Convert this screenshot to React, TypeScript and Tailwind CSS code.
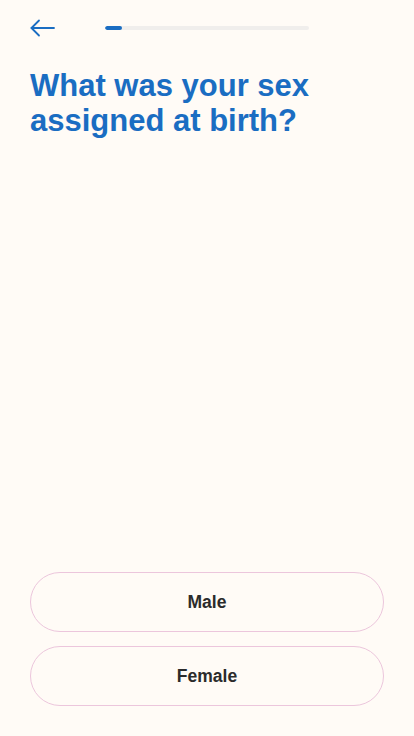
const options = ['Male', 'Female'];

export default function App() {
  return (
    <div
      className="min-h-[736px] w-full bg-[#fffbf6] flex flex-col px-[30px] pb-[30px]"
      style={{ fontFamily: '"Liberation Sans", Arial, sans-serif' }}
    >
      {/* Header */}
      <div className="flex items-center h-[54px] pt-[1px]">
        <button className="text-[#1a6dc2]" aria-label="Back">
          <svg width="25" height="18" viewBox="0 0 25 18" fill="none" stroke="currentColor" strokeWidth="1.8" strokeLinecap="round" strokeLinejoin="round">
            <path d="M24 9H1.5" />
            <path d="M9 1.5L1.5 9L9 16.5" />
          </svg>
        </button>
        <div className="ml-[50px] w-[204px] h-[4px] rounded-full bg-[#f0eeec] overflow-hidden">
          <div className="h-full w-[17px] rounded-full bg-[#1a6dc2]" />
        </div>
      </div>

      {/* Question */}
      <h1 className="mt-[14px] text-[31px] leading-[35px] font-bold text-[#1a6dc2]">
        What was your sex
        <br />
        assigned at birth?
      </h1>

      <div className="flex-1" />

      {/* Options */}
      <div className="flex flex-col gap-[14px]">
        {options.map((opt) => (
          <button
            key={opt}
            className="h-[60px] w-full rounded-full border border-[#ecc6dc] bg-[#fffbf6] text-[17.5px] font-bold text-[#2b2b2b]"
          >
            {opt}
          </button>
        ))}
      </div>
    </div>
  );
}
